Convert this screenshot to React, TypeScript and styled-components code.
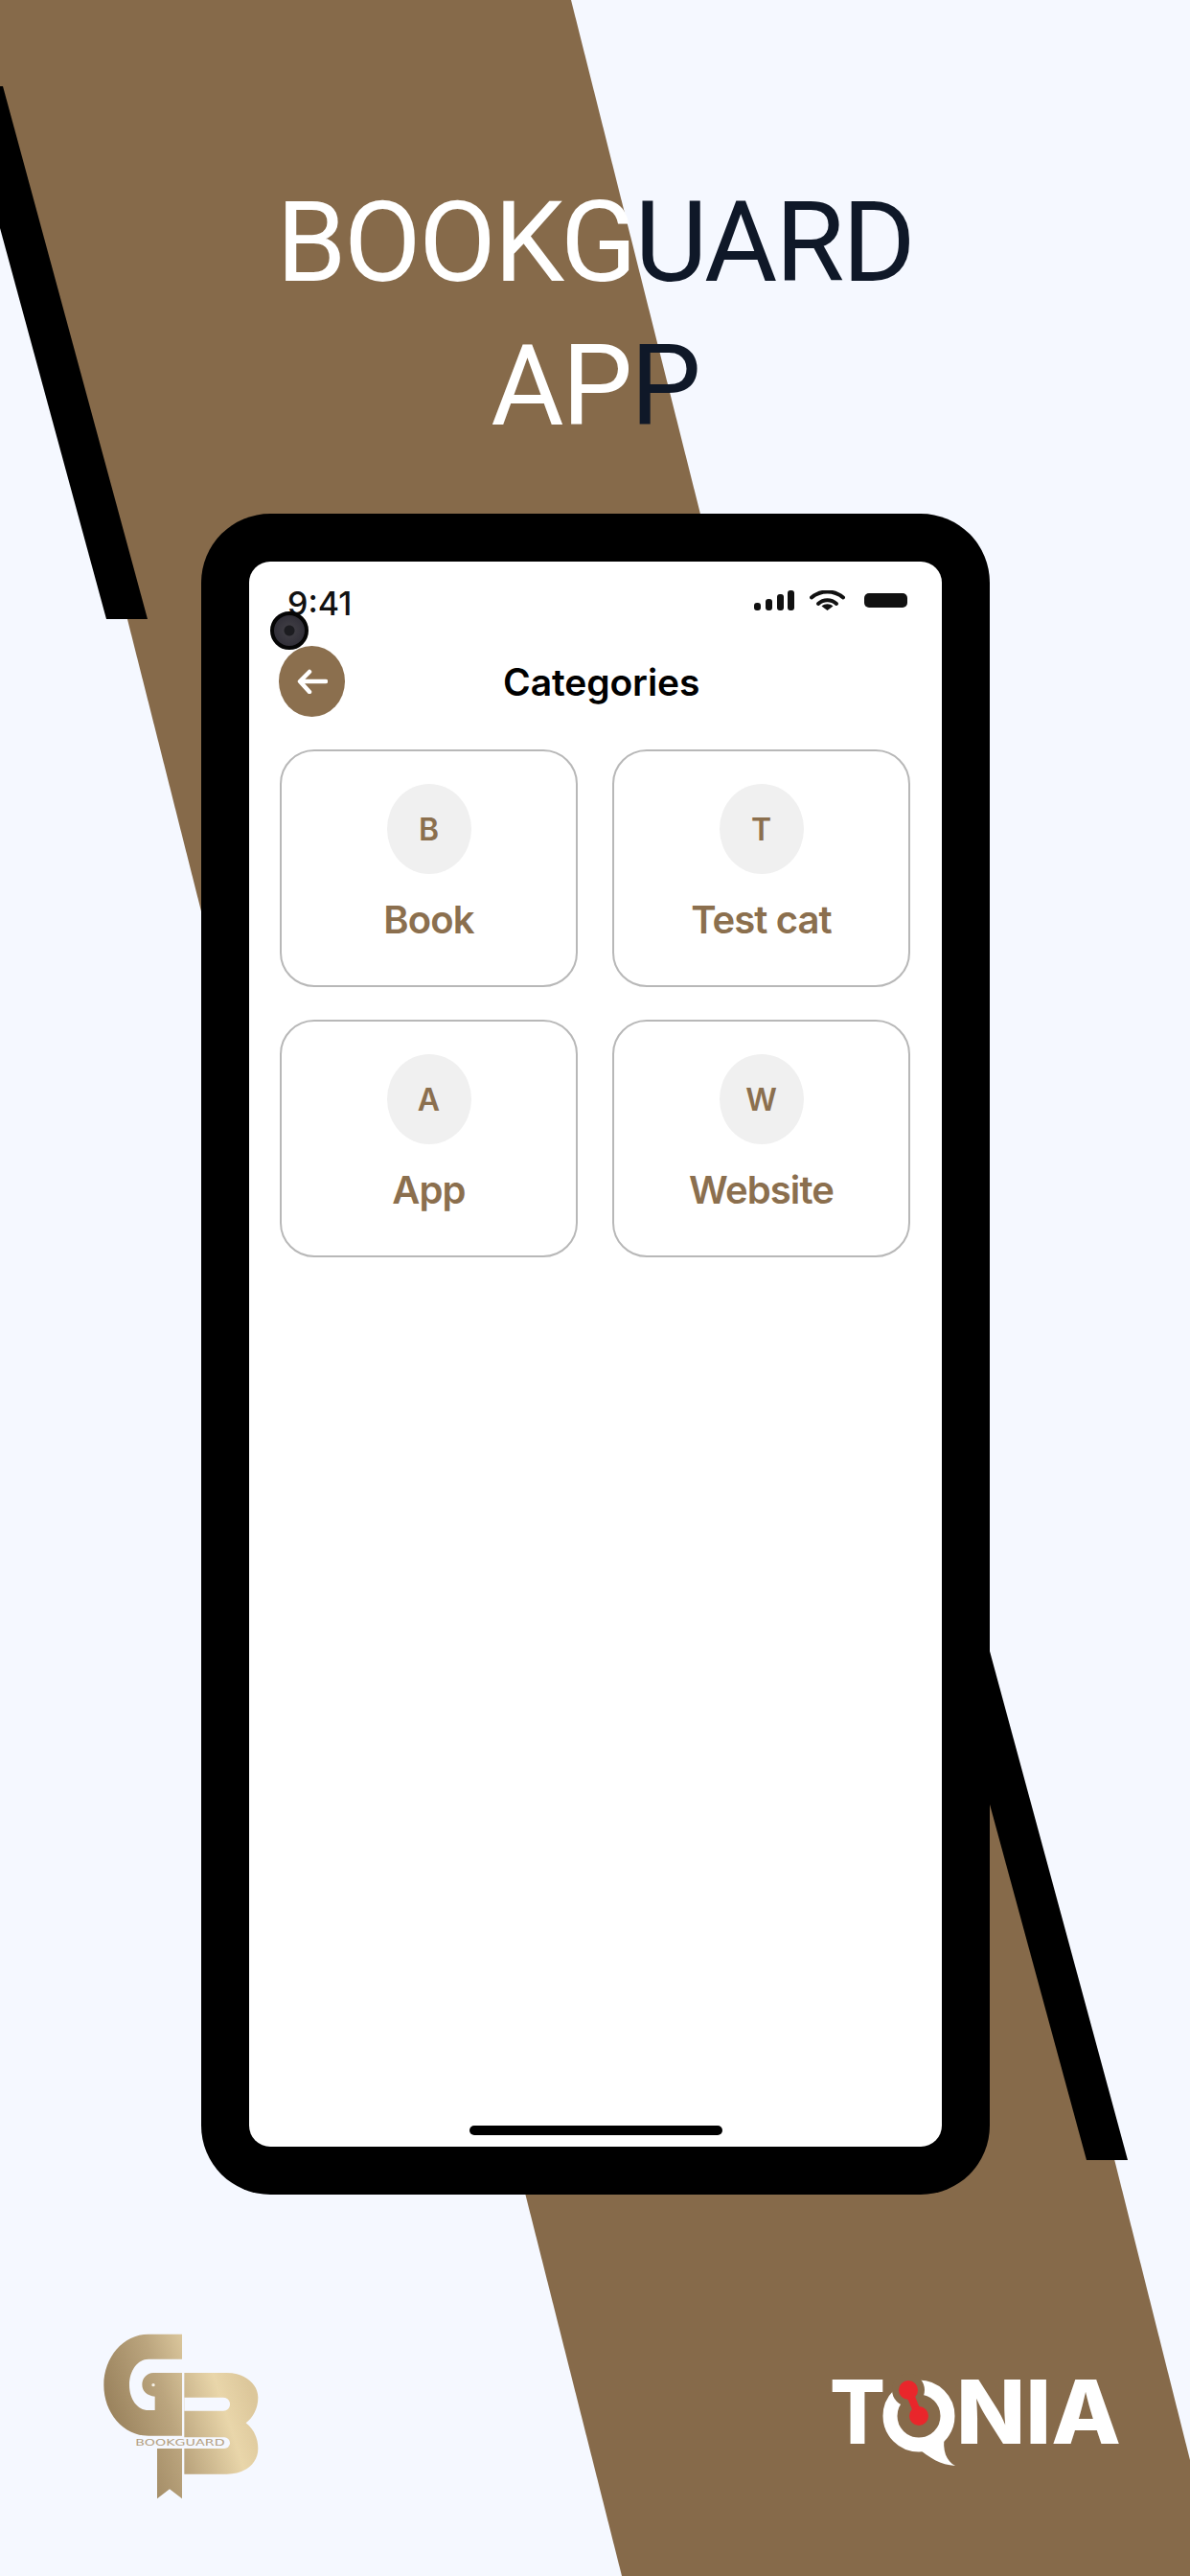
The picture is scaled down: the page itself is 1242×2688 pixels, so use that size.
import React from "react";
import styled, { createGlobalStyle } from "styled-components";

const brown = "#866A4A";
const accent = "#8B6F4E";
const pageBg = "#F5F8FF";

const Global = createGlobalStyle`
  html, body { margin: 0; padding: 0; background: ${pageBg}; }
`;

const Page = styled.div`
  position: relative;
  width: 1242px;
  height: 2688px;
  overflow: hidden;
  background: ${pageBg};
  display: flex;
  flex-direction: column;
  align-items: center;
  font-family: Inter, "Liberation Sans", sans-serif;
`;

const Backdrop = styled.svg`
  position: absolute;
  inset: 0;
  width: 1242px;
  height: 2688px;
`;

const Heading = styled.h1`
  position: relative;
  margin: 178px 0 0;
  font-family: Roboto, "Liberation Sans", sans-serif;
  font-weight: 450;
  font-size: 117px;
  line-height: 150px;
  letter-spacing: -2.2px;
  text-align: center;
  color: #ffffff;
`;

const HeadingLine = styled.div``;

const Dark = styled.span`
  color: #0f1828;
`;

const Phone = styled.div`
  position: relative;
  box-sizing: border-box;
  align-self: flex-start;
  width: 823px;
  height: 1754px;
  margin: 58px 0 0 210px;
  padding: 50px;
  background: #000;
  border-radius: 72px;
`;

const Screen = styled.div`
  position: relative;
  box-sizing: border-box;
  height: 1654px;
  display: flex;
  flex-direction: column;
  background: #fff;
  border-radius: 22px;
`;

const StatusBar = styled.div`
  display: flex;
  justify-content: space-between;
  align-items: flex-start;
  padding: 24px 36px 0 40px;
  height: 40px;
`;

const Time = styled.span`
  font-size: 34px;
  line-height: 40px;
  font-weight: 500;
  color: #111;
`;

const StatusIcons = styled.div`
  display: flex;
  align-items: center;
  margin-top: 6px;
  gap: 16px;
`;

const BatteryIcon = styled.svg`
  width: 45px;
  height: 15px;
  margin-left: 4px;
`;

const Camera = styled.div`
  position: absolute;
  left: 22px;
  top: 52px;
  box-sizing: border-box;
  width: 40px;
  height: 40px;
  border-radius: 50%;
  border: 4px solid #050505;
  background: radial-gradient(circle at 50% 50%, #1c1c20 0 5px, #3d3b42 6px, #2a2832 100%);
`;

const Header = styled.div`
  display: flex;
  align-items: center;
  margin-top: 24px;
  padding-left: 31px;
`;

const BackButton = styled.div`
  width: 69px;
  height: 74px;
  border-radius: 50%;
  background: ${accent};
  display: flex;
  align-items: center;
  justify-content: center;
`;

const Title = styled.h2`
  margin: 0 0 0 165px;
  font-size: 39px;
  font-weight: 600;
  letter-spacing: -0.1px;
  color: #000;
`;

const Grid = styled.div`
  display: grid;
  grid-template-columns: 311px 311px;
  grid-auto-rows: 248px;
  column-gap: 36px;
  row-gap: 34px;
  margin-top: 34px;
  padding-left: 32px;
`;

const Card = styled.div`
  box-sizing: border-box;
  display: flex;
  flex-direction: column;
  align-items: center;
  padding-top: 34px;
  border: 2px solid #b8b8b8;
  border-radius: 36px;
`;

const Avatar = styled.div`
  width: 88px;
  height: 94px;
  border-radius: 50%;
  background: #f0f0f0;
  color: ${accent};
  font-size: 32px;
  font-weight: 600;
  display: flex;
  align-items: center;
  justify-content: center;
`;

const CardLabel = styled.div`
  margin-top: 24px;
  font-size: 40px;
  line-height: 48px;
  font-weight: 600;
  letter-spacing: -0.9px;
  color: ${accent};
`;

const HomeBar = styled.div`
  align-self: center;
  width: 264px;
  height: 10px;
  margin-top: auto;
  margin-bottom: 12px;
  border-radius: 5px;
  background: #000;
`;

const Footer = styled.div`
  position: relative;
  box-sizing: border-box;
  width: 100%;
  display: flex;
  justify-content: space-between;
  align-items: flex-start;
  margin-top: 110px;
  padding: 0 52px 0 60px;
`;

const BookguardMark = styled.svg`
  width: 300px;
  height: 230px;
`;

const TqniaMark = styled.svg`
  width: 350px;
  height: 160px;
  margin-top: 40px;
`;

const categories = [
  { letter: "B", name: "Book" },
  { letter: "T", name: "Test cat" },
  { letter: "A", name: "App" },
  { letter: "W", name: "Website" },
];

const Signal = () => (
  <svg width="42" height="21" viewBox="0 0 42 21">
    <rect x="0" y="13" width="7" height="8" rx="3" fill="#111" />
    <rect x="12" y="9" width="7" height="12" rx="3" fill="#111" />
    <rect x="24" y="4" width="7" height="17" rx="3" fill="#111" />
    <rect x="35" y="0" width="7" height="21" rx="3" fill="#111" />
  </svg>
);

const Wifi = () => (
  <svg width="37" height="21" viewBox="0 0 37 21" fill="none">
    <path d="M2 7.5C11.5 -0.5 25.5 -0.5 35 7.5" stroke="#111" strokeWidth="4" strokeLinecap="round" />
    <path d="M9 14C14.5 9 22.5 9 28 14" stroke="#111" strokeWidth="4" strokeLinecap="round" />
    <path d="M12.5 16.5C16 13.5 21 13.5 24.5 16.5L18.5 21Z" fill="#111" />
  </svg>
);

const Battery = () => (
  <BatteryIcon viewBox="0 0 45 15">
    <rect width="45" height="15" rx="5" fill="#111" />
  </BatteryIcon>
);

const ArrowLeft = () => (
  <svg width="32" height="26" viewBox="0 0 32 26" fill="none">
    <path d="M30 13H4M13 3L3 13L13 24" stroke="#fff" strokeWidth="4.5" strokeLinecap="round" strokeLinejoin="round" />
  </svg>
);

const Bookguard = () => (
  <BookguardMark viewBox="0 0 900 690">
    <defs>
      <linearGradient id="gold" gradientUnits="userSpaceOnUse" x1="145" y1="420" x2="600" y2="270">
        <stop offset="0" stopColor="#937b56" />
        <stop offset="0.45" stopColor="#bba57e" />
        <stop offset="0.8" stopColor="#e9d6aa" />
        <stop offset="1" stopColor="#dcc79b" />
      </linearGradient>
    </defs>
    <path
      fill="url(#gold)"
      d="M390 107H285C205 107 145 180 145 266C145 352 205 425 285 425H390V228H300C280 228 265 245 265 265C265 285 280 300 305 302V345H285C250 345 225 310 225 266C225 222 250 185 285 185H390Z"
    />
    <circle cx="300" cy="266" r="5" fill="#f5f0e4" />
    <path fill="url(#gold)" d="M312 465H390V622L351 592L312 622Z" />
    <path
      fill="url(#gold)"
      d="M397 228H530C590 228 628 265 628 305C628 340 612 368 590 385C612 402 628 430 628 465C628 510 590 545 530 545H397Z"
    />
    <path fill={pageBg} d="M397 305H519C531 305 540 314 540 326C540 338 531 347 519 347H397Z" />
    <rect x="235" y="430" width="305" height="35" rx="17.5" fill={pageBg} />
    <text
      x="244"
      y="456"
      textLength="280"
      lengthAdjust="spacingAndGlyphs"
      fontFamily="'DejaVu Sans', sans-serif"
      fontSize="27"
      fill="#b3a083"
    >
      BOOKGUARD
    </text>
  </BookguardMark>
);

const Tqnia = () => (
  <TqniaMark viewBox="0 0 350 160">
    <text x="26" y="110" textLength="58" lengthAdjust="spacingAndGlyphs" fontFamily="Inter, sans-serif" fontWeight="800" fontSize="92" fill="#fff">
      T
    </text>
    <circle cx="119" cy="81" r="30" fill="none" stroke="#fff" strokeWidth="15" />
    <path d="M116 113C130 125 142 132 157 133C148 128 143 118 146 100Z" fill="#fff" />
    <circle cx="108" cy="54" r="17" fill={brown} />
    <path d="M108 54L119 81" stroke="#e9262b" strokeWidth="8" />
    <circle cx="108" cy="54" r="10" fill="#e9262b" />
    <circle cx="119" cy="81" r="10" fill="#e9262b" />
    <text x="158" y="110" textLength="172" lengthAdjust="spacingAndGlyphs" fontFamily="Inter, sans-serif" fontWeight="800" fontSize="92" fill="#fff">
      NIA
    </text>
  </TqniaMark>
);

export default function App() {
  return (
    <Page>
      <Global />
      <Backdrop viewBox="0 0 1242 2688">
        <polygon points="0,0 596,0 1242,2567 1242,2688 649,2688 0,120" fill={brown} />
        <polygon points="0,90 3,90 154,646 111,646 0,238" fill="#000" />
        <polygon points="1020,1723 1033,1723 1177,2254 1134,2254 1020,1835" fill="#000" />
      </Backdrop>
      <Heading>
        <HeadingLine>
          BOOKG<Dark>UARD</Dark>
        </HeadingLine>
        <HeadingLine>
          AP<Dark>P</Dark>
        </HeadingLine>
      </Heading>
      <Phone>
        <Screen>
          <StatusBar>
            <Time>9:41</Time>
            <StatusIcons>
              <Signal />
              <Wifi />
              <Battery />
            </StatusIcons>
          </StatusBar>
          <Camera />
          <Header>
            <BackButton>
              <ArrowLeft />
            </BackButton>
            <Title>Categories</Title>
          </Header>
          <Grid>
            {categories.map((c) => (
              <Card key={c.name}>
                <Avatar>{c.letter}</Avatar>
                <CardLabel>{c.name}</CardLabel>
              </Card>
            ))}
          </Grid>
          <HomeBar />
        </Screen>
      </Phone>
      <Footer>
        <Bookguard />
        <Tqnia />
      </Footer>
    </Page>
  );
}
